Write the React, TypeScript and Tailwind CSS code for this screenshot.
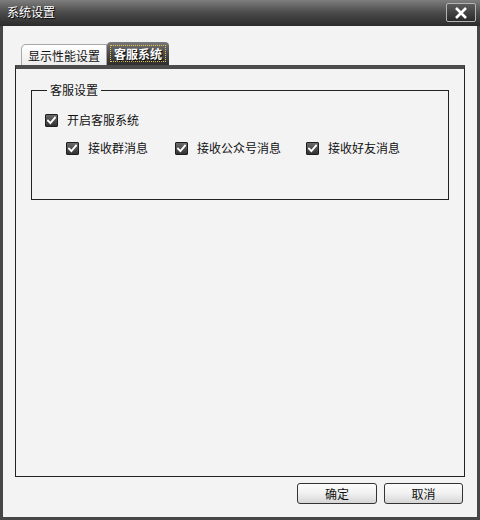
import { useState } from "react";

const font = "font-['Noto_Sans_CJK_SC','Noto_Sans',sans-serif]";

const CheckBox = ({
  label,
  checked,
  onToggle,
}: {
  label: string;
  checked: boolean;
  onToggle: () => void;
}) => {
  return (
    <div className="flex items-center cursor-pointer" onClick={onToggle}>
      <span className="flex h-[13px] w-[13px] items-center justify-center rounded-[1px] border border-[#1e1e1e] bg-gradient-to-b from-[#6a6a6a] to-[#333333]">
        {checked && (
          <svg width="9" height="9" viewBox="0 0 9 9">
            <path
              d="M1 4.6 L3.4 7 L8 1.6"
              fill="none"
              stroke="#ffffff"
              strokeWidth="1.9"
              strokeLinecap="square"
            />
          </svg>
        )}
      </span>
      <span className="ml-[9px] text-[12px] leading-[14px] text-[#111]">
        {label}
      </span>
    </div>
  );
};

export default function App() {
  const [activeTab, setActiveTab] = useState(1);
  const [checks, setChecks] = useState({
    enable: true,
    group: true,
    official: true,
    friend: true,
  });
  const toggle = (key: keyof typeof checks) =>
    setChecks({ ...checks, [key]: !checks[key] });

  return (
    <div className={`flex h-[520px] w-[480px] flex-col bg-[#464646] ${font}`}>
      {/* title bar */}
      <div className="flex h-[26px] items-start justify-between bg-gradient-to-b from-[#7e7e7e] via-[#4a4a4a] to-[#2c2c2c] pl-[7px] pr-[4px]">
        <span className="mt-[5px] text-[12px] leading-[14px] text-white [text-shadow:1px_1px_1px_#000]">
          系统设置
        </span>
        <button className="mt-[3px] flex h-[19px] w-[30px] items-center justify-center rounded-[2px] border border-[#b4b4b4] bg-gradient-to-b from-[#5c5c5c] to-[#2a2a2a]">
          <svg width="14" height="12" viewBox="0 0 14 12">
            <path
              d="M2 1 L12 11 M12 1 L2 11"
              stroke="#ffffff"
              strokeWidth="2.6"
              strokeLinecap="butt"
            />
          </svg>
        </button>
      </div>

      {/* body */}
      <div className="mx-[3px] mb-[3px] flex flex-1 flex-col bg-[#f3f3f3] px-[12px] pt-[17px]">
        {/* tabs */}
        <div className="flex h-[22px] items-end pl-[6px]">
          <div
            onClick={() => setActiveTab(0)}
            className={
              activeTab === 0
                ? "flex h-[23px] cursor-pointer items-center rounded-t-[5px] bg-gradient-to-b from-[#7a7a7a] to-[#2e2e2e] px-[3px]"
                : "flex h-[21px] cursor-pointer items-center rounded-tl-[5px] border border-b-0 border-[#a8a8a8] bg-gradient-to-b from-[#ffffff] to-[#ececec] px-[6px]"
            }
          >
            <span
              className={
                activeTab === 0
                  ? "border border-dotted border-[#e6c24a] px-[3px] text-[12px] leading-[15px] text-white [text-shadow:1px_1px_1px_#000]"
                  : "text-[12px] leading-[15px] text-[#111]"
              }
            >
              显示性能设置
            </span>
          </div>
          <div
            onClick={() => setActiveTab(1)}
            className={
              activeTab === 1
                ? "flex h-[23px] cursor-pointer items-center rounded-t-[4px] bg-gradient-to-b from-[#7a7a7a] via-[#4a4a4a] to-[#2e2e2e] px-[3px]"
                : "flex h-[21px] cursor-pointer items-center rounded-tr-[5px] border border-b-0 border-[#a8a8a8] bg-gradient-to-b from-[#ffffff] to-[#ececec] px-[6px]"
            }
          >
            <span
              className={
                activeTab === 1
                  ? "border border-dotted border-[#e6c24a] px-[3px] text-[12px] font-bold leading-[15px] text-white [text-shadow:1px_1px_1px_#000]"
                  : "text-[12px] leading-[15px] text-[#111]"
              }
            >
              客服系统
            </span>
          </div>
        </div>

        {/* panel */}
        <div className="flex h-[412px] flex-col border border-t-[4px] border-[#222] border-t-[#4c4c4c] px-[15px] pt-[14px]">
          {activeTab === 1 && (
            <fieldset className="h-[117px] border border-[#222] px-[13px] pb-0">
              <legend className="ml-[2px] px-[3px] text-[12px] leading-[14px] text-[#111]">
                客服设置
              </legend>
              <div className="mt-[16px] flex flex-col gap-[14px]">
                <CheckBox
                  label="开启客服系统"
                  checked={checks.enable}
                  onToggle={() => toggle("enable")}
                />
                <div className="flex pl-[21px]">
                  <div className="w-[109px]">
                    <CheckBox
                      label="接收群消息"
                      checked={checks.group}
                      onToggle={() => toggle("group")}
                    />
                  </div>
                  <div className="w-[131px]">
                    <CheckBox
                      label="接收公众号消息"
                      checked={checks.official}
                      onToggle={() => toggle("official")}
                    />
                  </div>
                  <CheckBox
                    label="接收好友消息"
                    checked={checks.friend}
                    onToggle={() => toggle("friend")}
                  />
                </div>
              </div>
            </fieldset>
          )}
        </div>

        {/* footer */}
        <div className="flex flex-1 items-start justify-end gap-[7px] pr-[2px] pt-[6px]">
          <button className="h-[21px] w-[80px] rounded-[3px] border border-[#333] bg-gradient-to-b from-[#fdfdfd] via-[#f0f0f0] to-[#d6d6d6] text-[12px] leading-[14px] text-[#111]">
            确定
          </button>
          <button className="h-[21px] w-[79px] rounded-[3px] border border-[#333] bg-gradient-to-b from-[#fdfdfd] via-[#f0f0f0] to-[#d6d6d6] text-[12px] leading-[14px] text-[#111]">
            取消
          </button>
        </div>
      </div>
    </div>
  );
}
